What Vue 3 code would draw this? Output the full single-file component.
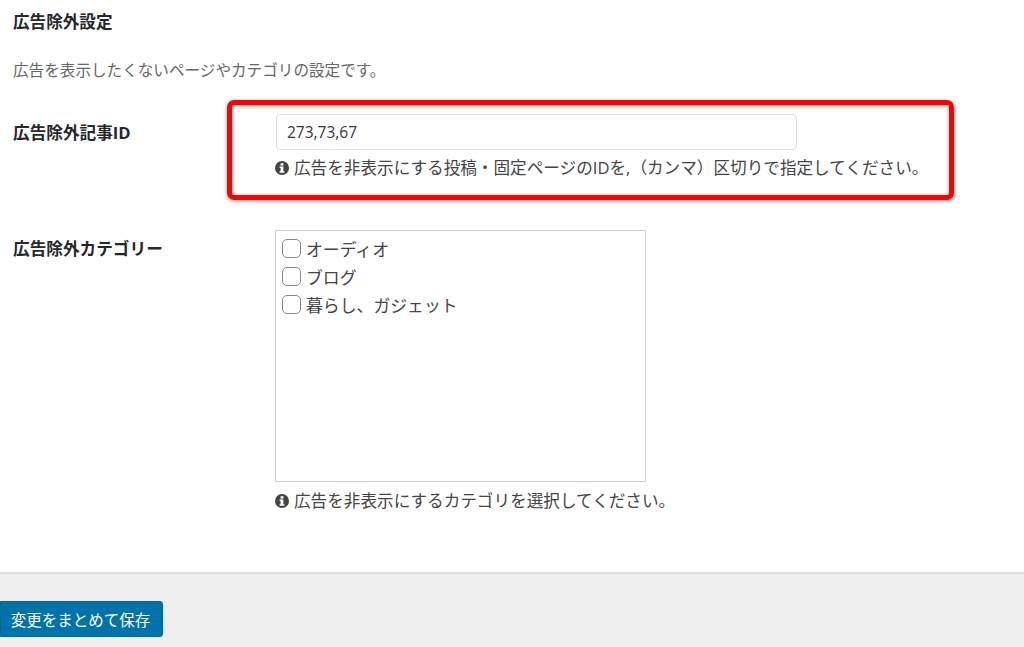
<script setup>
const categories = ['オーディオ', 'ブログ', '暮らし、ガジェット']
</script>

<template>
  <div class="page">
    <main class="content">
      <h2 class="title">広告除外設定</h2>
      <p class="desc">広告を表示したくないページやカテゴリの設定です。</p>

      <section class="row row-id">
        <div class="label">広告除外記事ID</div>
        <div class="field">
          <input class="text" type="text" value="273,73,67" />
          <p class="help help-id">
            <svg class="info" viewBox="0 0 14 14"><circle cx="7" cy="7" r="7" fill="#444"/><rect x="5.6" y="2.2" width="2.8" height="2.4" fill="#fff"/><path d="M4.6 5.6h3.8v4.7h1v1.5H4.6v-1.5h1V7.1h-1z" fill="#fff"/></svg>
            <span>広告を非表示にする投稿・固定ページのIDを,（カンマ）区切りで指定してください。</span>
          </p>
        </div>
      </section>

      <section class="row row-cat">
        <div class="label">広告除外カテゴリー</div>
        <div class="field">
          <div class="catbox">
            <label v-for="c in categories" :key="c" class="cat">
              <span class="check"></span>
              <span>{{ c }}</span>
            </label>
          </div>
          <p class="help help-cat">
            <svg class="info" viewBox="0 0 14 14"><circle cx="7" cy="7" r="7" fill="#444"/><rect x="5.6" y="2.2" width="2.8" height="2.4" fill="#fff"/><path d="M4.6 5.6h3.8v4.7h1v1.5H4.6v-1.5h1V7.1h-1z" fill="#fff"/></svg>
            <span>広告を非表示にするカテゴリを選択してください。</span>
          </p>
        </div>
      </section>
    </main>

    <footer class="footer">
      <button class="save" type="button">変更をまとめて保存</button>
    </footer>

    <div class="highlight"></div>
  </div>
</template>

<style>
html, body { margin: 0; background: #fff; }
</style>

<style scoped>
.page {
  position: relative;
  width: 1024px;
  height: 647px;
  overflow: hidden;
  background: #fff;
  font-family: "Open Sans", "Noto Sans CJK JP", sans-serif;
  color: #444;
  display: flex;
  flex-direction: column;
}
.content {
  flex: 1;
  padding: 12px 0 0 13px;
}
.title {
  margin: 0;
  font-size: 16.6px;
  line-height: 20px;
  font-weight: 700;
  color: #23282d;
}
.desc {
  margin: 28px 0 0;
  font-size: 15.6px;
  line-height: 20px;
  color: #666;
}
.row {
  display: flex;
}
.row-id { margin-top: 34px; }
.row-cat { margin-top: 51px; }
.label {
  width: 262px;
  font-size: 16.65px;
  line-height: 20px;
  font-weight: 700;
  color: #23282d;
}
.row-id .label { padding-top: 9px; }
.row-cat .label { padding-top: 9px; }
.field { flex: 1; }
.text {
  display: block;
  box-sizing: border-box;
  width: 521px;
  height: 36px;
  margin-left: 1px;
  padding: 0 10px;
  border: 1px solid #ddd;
  border-radius: 4px;
  font: 15.5px "Open Sans", "Noto Sans CJK JP", sans-serif;
  color: #32373c;
  outline: none;
}
.help {
  display: flex;
  align-items: center;
  gap: 5px;
  margin: 0;
  font-size: 16.62px;
  line-height: 22px;
  color: #444;
  white-space: nowrap;
}
.help-id { margin-top: 7px; }
.help-cat { margin-top: 8px; }
.info { width: 14px; height: 14px; flex: none; }
.catbox {
  box-sizing: border-box;
  width: 371px;
  height: 252px;
  border: 1px solid #ccc;
  padding: 3px 0 0 6px;
}
.cat {
  display: flex;
  align-items: center;
  gap: 5px;
  height: 28px;
  font-size: 16.85px;
  color: #444;
}
.check {
  box-sizing: border-box;
  width: 19px;
  height: 19px;
  border: 1px solid #888;
  border-radius: 5px;
  background: #fff;
}
.footer {
  height: 75px;
  box-sizing: border-box;
  border-top: 2px solid #ddd;
  background: #efefef;
  padding-top: 27px;
}
.save {
  display: block;
  width: 163px;
  height: 36px;
  padding: 0 2px 0 0;
  border: 1px solid #006799;
  border-radius: 0 3px 3px 0;
  background: #0073aa;
  color: #fff;
  font: 15.5px "Open Sans", "Noto Sans CJK JP", sans-serif;
}
.highlight {
  position: absolute;
  left: 227px;
  top: 100px;
  width: 727px;
  height: 100px;
  box-sizing: border-box;
  border: 5px solid #f00;
  border-radius: 7px;
  box-shadow: 0 1px 4px rgba(0,0,0,.4), inset 0 1px 4px rgba(0,0,0,.4);
  pointer-events: none;
}
</style>
